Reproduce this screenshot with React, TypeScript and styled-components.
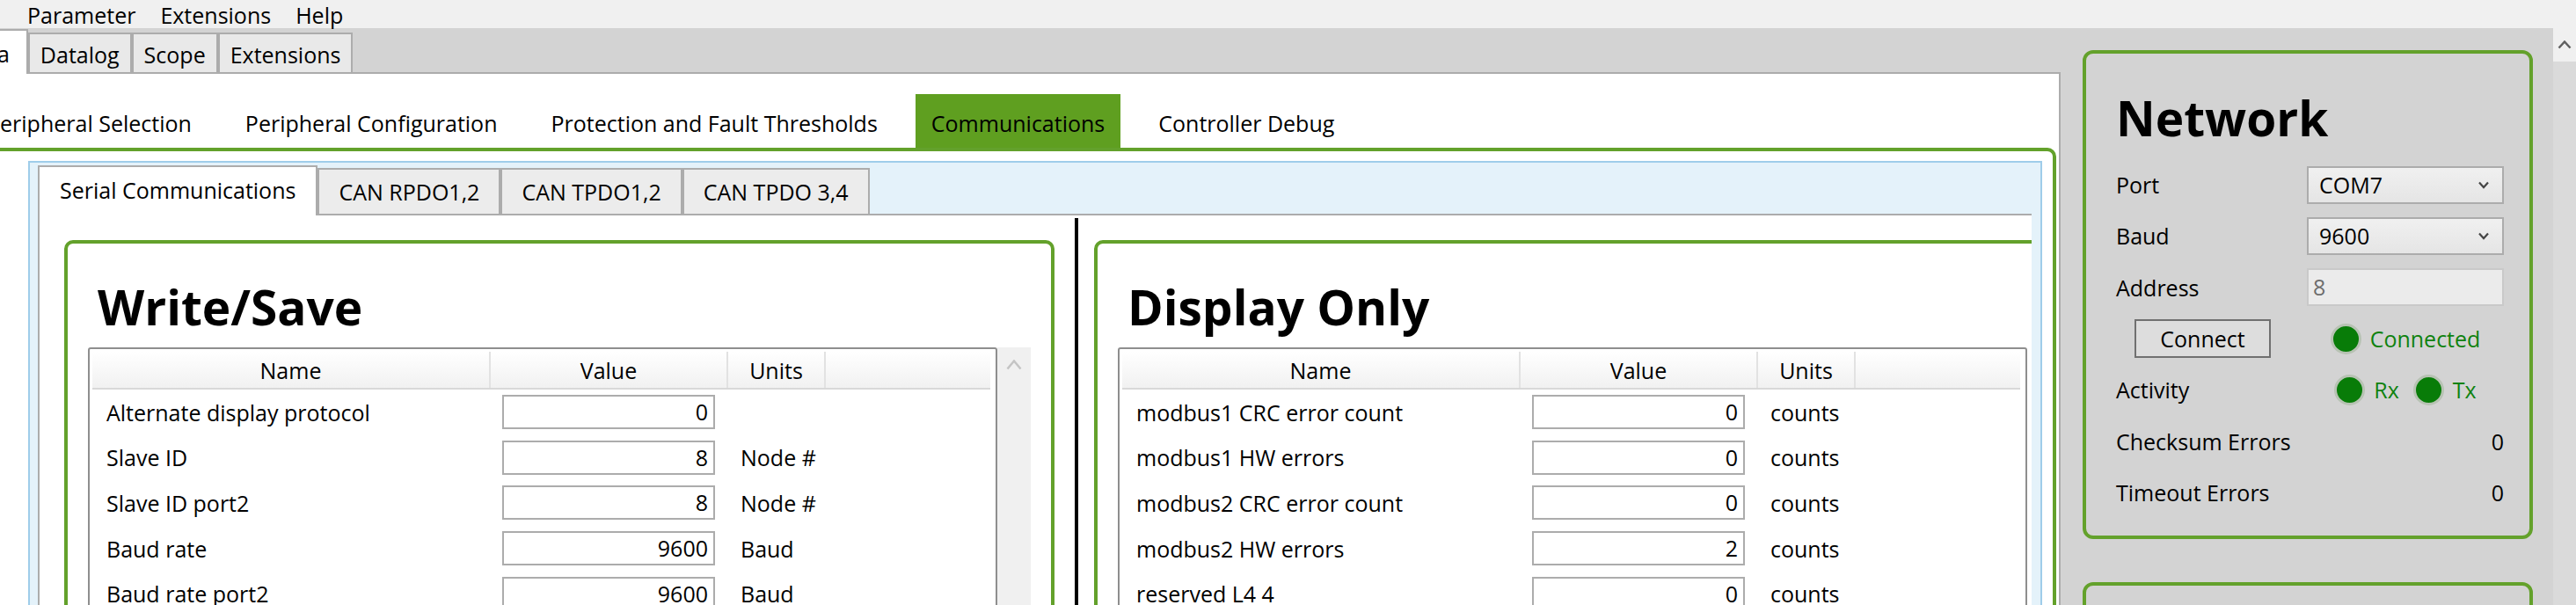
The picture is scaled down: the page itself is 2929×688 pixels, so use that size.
import React from "react";
import styled, { createGlobalStyle } from "styled-components";

const GREEN = "#63a12b";
const TAB_GREEN = "#5f9f20";
const TAB_BORDER = "#acacac";

const GlobalStyle = createGlobalStyle`
  html, body {
    margin: 0;
    padding: 0;
  }
  body {
    width: 2929px;
    height: 688px;
    overflow: hidden;
    background: #d3d3d3;
    color: #000;
    font-family: "Open Sans", "Noto Sans", sans-serif;
    font-size: 25px;
  }
`;

const Window = styled.div`
  display: flex;
  flex-direction: column;
  width: 2929px;
  height: 688px;
  overflow: hidden;
  background: #d3d3d3;
`;

const MenuBar = styled.div`
  display: flex;
  align-items: flex-start;
  flex-shrink: 0;
  height: 32px;
  padding-left: 17px;
  background: #f0f0f0;
`;

const MenuItem = styled.span`
  padding: 0 14px;
  line-height: 34px;
`;

const Body = styled.div`
  display: flex;
  flex: 1;
  min-height: 0;
`;

const MainColumn = styled.div`
  display: flex;
  flex-direction: column;
  flex-shrink: 0;
  width: 2343px;
`;

/* the window is scrolled a little to the right, so the first tabs are cut */
const OuterTabStrip = styled.div`
  display: flex;
  align-items: flex-end;
  flex-shrink: 0;
  height: 50px;
  margin-left: -59px;
`;

const OuterTab = styled.div<{ $active?: boolean }>`
  position: relative;
  z-index: ${(p) => (p.$active ? 1 : 0)};
  display: flex;
  align-items: center;
  box-sizing: border-box;
  height: ${(p) => (p.$active ? 51 : 45)}px;
  margin-bottom: ${(p) => (p.$active ? -2 : 0)}px;
  padding: ${(p) => (p.$active ? "2px 19px 0 13px" : "2px 12px 0")};
  border: 2px solid ${TAB_BORDER};
  border-bottom: none;
  background: ${(p) => (p.$active ? "#fff" : "#e9e9e9")};
  line-height: 34px;
  white-space: nowrap;
`;

const MainPanel = styled.div`
  display: flex;
  flex-direction: column;
  flex: 1;
  min-height: 0;
  padding-top: 23px;
  overflow: hidden;
  background: #fff;
  border-top: 2px solid ${TAB_BORDER};
  border-right: 2px solid ${TAB_BORDER};
`;

const SubTabStrip = styled.div`
  display: flex;
  flex-shrink: 0;
  gap: 25px;
  margin-left: -33px;
`;

const SubTab = styled.div<{ $active?: boolean }>`
  display: flex;
  align-items: center;
  box-sizing: border-box;
  height: 61px;
  padding: 4px 18px 0;
  background: ${(p) => (p.$active ? TAB_GREEN : "transparent")};
  white-space: nowrap;
`;

const GreenFrame = styled.div`
  display: flex;
  flex-direction: column;
  flex: 1;
  min-height: 0;
  margin: 0 3px 0 -16px;
  padding: 11px 12px 0 44px;
  border: 4px solid ${GREEN};
  border-bottom: none;
  border-radius: 10px 10px 0 0;
`;

const BluePanel = styled.div`
  display: flex;
  flex-direction: column;
  flex: 1;
  min-height: 0;
  padding: 3px 10px 0 9px;
  background: #e4f2fa;
  border: 2px solid #9fcdea;
  border-bottom: none;
`;

const PageTabStrip = styled.div`
  display: flex;
  align-items: flex-end;
  flex-shrink: 0;
  height: 55px;
`;

const PageTab = styled.div<{ $active?: boolean }>`
  position: relative;
  z-index: ${(p) => (p.$active ? 1 : 0)};
  display: flex;
  align-items: center;
  box-sizing: border-box;
  height: ${(p) => (p.$active ? 57 : 52)}px;
  margin-bottom: ${(p) => (p.$active ? -2 : 0)}px;
  padding: 0 ${(p) => (p.$active ? 23 : 22)}px ${(p) => (p.$active ? 3 : 0)}px;
  border: 2px solid ${TAB_BORDER};
  border-bottom: none;
  background: ${(p) => (p.$active ? "#fff" : "#ececec")};
  white-space: nowrap;
`;

const TabContent = styled.div`
  display: flex;
  align-items: flex-start;
  flex: 1;
  min-height: 0;
  padding: 3px 0 0 28px;
  overflow: hidden;
  background: #fff;
  border: 2px solid ${TAB_BORDER};
  border-bottom: none;
  border-right: none;
`;

const Column = styled.div`
  flex-shrink: 0;
  width: 1126px;
  padding-top: 25px;
`;

const Splitter = styled.div`
  flex-shrink: 0;
  align-self: stretch;
  width: 4px;
  margin: 0 18px 0 23px;
  background: #000;
`;

const GroupBox = styled.div`
  box-sizing: border-box;
  height: 480px;
  padding: 0 23px;
  border: 4px solid ${GREEN};
  border-radius: 10px;
`;

const GroupTitle = styled.h2`
  margin: 34px 0 9px 11px;
  font-size: 55px;
  font-weight: 700;
  line-height: 75px;
`;

const GridWrap = styled.div`
  display: flex;
`;

const Grid = styled.div`
  flex: 1;
  height: 400px;
  padding: 3px 6px 0 3px;
  border: 2px solid #8e8e8e;
  border-radius: 3px;
`;

const HeaderRow = styled.div`
  display: flex;
  box-sizing: border-box;
  height: 43px;
  background: linear-gradient(#ffffff, #f1f1f1);
  border-bottom: 2px solid #d8d8d8;
`;

const HeaderCell = styled.div<{ $w?: number }>`
  box-sizing: border-box;
  flex: ${(p) => (p.$w ? `0 0 ${p.$w}px` : "1")};
  padding-top: 1px;
  border-right: ${(p) => (p.$w ? "2px solid #e2e2e2" : "none")};
  text-align: center;
  line-height: 40px;
`;

const Row = styled.div`
  display: flex;
  align-items: center;
  height: 51.6px;
`;

const NameCell = styled.div`
  flex: 0 0 453px;
  box-sizing: border-box;
  padding-left: 16px;
  white-space: nowrap;
`;

const ValueCell = styled.div`
  flex: 0 0 270px;
  box-sizing: border-box;
  padding-left: 13px;
`;

const ValueBox = styled.div`
  box-sizing: border-box;
  width: 242px;
  height: 39px;
  padding-right: 6px;
  border: 2px solid ${TAB_BORDER};
  text-align: right;
  line-height: 35px;
`;

const UnitCell = styled.div`
  padding-left: 14px;
  white-space: nowrap;
`;

const GridScroll = styled.div<{ $hidden?: boolean }>`
  display: flex;
  justify-content: center;
  flex: 0 0 38px;
  padding-top: 14px;
  box-sizing: border-box;
  background: ${(p) => (p.$hidden ? "transparent" : "#f0f0f0")};
`;

const SideArea = styled.div`
  display: flex;
  flex: 1;
  min-width: 0;
`;

const SideContent = styled.div`
  display: flex;
  flex-direction: column;
  flex: 1;
  gap: 49px;
  padding: 25px 23px 0 25px;
  overflow: hidden;
`;

const Panel = styled.div<{ $h?: number }>`
  flex-shrink: 0;
  box-sizing: border-box;
  height: ${(p) => (p.$h ? `${p.$h}px` : "auto")};
  padding: 0 29px 20px 34px;
  border: 4px solid ${GREEN};
  border-radius: 12px;
`;

const PanelTitle = styled.h2`
  margin: 35px 0 10px;
  font-size: 55px;
  font-weight: 700;
  line-height: 75px;
`;

const NetGrid = styled.div`
  display: grid;
  grid-template-columns: 217px 1fr;
  grid-auto-rows: 58.3px;
  align-items: center;
`;

const Combo = styled.div`
  display: flex;
  align-items: center;
  justify-content: space-between;
  box-sizing: border-box;
  height: 43px;
  padding: 0 15px 0 12px;
  background: linear-gradient(#f0f0f0, #e5e5e5);
  border: 2px solid ${TAB_BORDER};
`;

const AddressBox = styled.div`
  box-sizing: border-box;
  height: 43px;
  padding-left: 5px;
  background: #ebebeb;
  border: 2px solid #c9c9c9;
  color: #6d6d6d;
  line-height: 39px;
`;

const Button = styled.div`
  box-sizing: border-box;
  width: 155px;
  height: 44px;
  margin-left: 21px;
  background: #dddddd;
  border: 2px solid #707070;
  text-align: center;
  line-height: 40px;
`;

const LedGroup = styled.div`
  display: flex;
  align-items: center;
  justify-self: center;
  gap: 16px;
`;

const Led = styled.div`
  display: flex;
  align-items: center;
  gap: 10px;
  color: #0f820f;
`;

const Dot = styled.span`
  box-sizing: border-box;
  width: 35px;
  height: 35px;
  background: #087c08;
  border: 3px solid #b7c2b3;
  border-radius: 50%;
`;

const Count = styled.div`
  justify-self: end;
`;

const PageScroll = styled.div`
  display: flex;
  flex-direction: column;
  flex-shrink: 0;
  width: 26px;
  background: #dadada;
`;

const ScrollButton = styled.div`
  display: flex;
  align-items: center;
  justify-content: center;
  height: 38px;
  background: #f0f0f0;
`;

const ChevronUp = ({ color, w, h }: { color: string; w: number; h: number }) => (
  <svg width={w} height={h} viewBox={`0 0 ${w} ${h}`}>
    <polyline
      points={`1.5,${h - 1.5} ${w / 2},1.5 ${w - 1.5},${h - 1.5}`}
      fill="none"
      stroke={color}
      strokeWidth="2.5"
    />
  </svg>
);

const ChevronDown = () => (
  <svg width="12" height="9" viewBox="0 0 12 9">
    <polyline points="1,1.5 6,7 11,1.5" fill="none" stroke="#454545" strokeWidth="2.2" />
  </svg>
);

interface IRow {
  name: string;
  value: string;
  units: string;
}

const writeRows: IRow[] = [
  { name: "Alternate display protocol", value: "0", units: "" },
  { name: "Slave ID", value: "8", units: "Node #" },
  { name: "Slave ID port2", value: "8", units: "Node #" },
  { name: "Baud rate", value: "9600", units: "Baud" },
  { name: "Baud rate port2", value: "9600", units: "Baud" },
];

const displayRows: IRow[] = [
  { name: "modbus1 CRC error count", value: "0", units: "counts" },
  { name: "modbus1 HW errors", value: "0", units: "counts" },
  { name: "modbus2 CRC error count", value: "0", units: "counts" },
  { name: "modbus2 HW errors", value: "2", units: "counts" },
  { name: "reserved L4 4", value: "0", units: "counts" },
];

const ParamGroup = ({ title, rows, scroll }: { title: string; rows: IRow[]; scroll?: boolean }) => (
  <GroupBox>
    <GroupTitle>{title}</GroupTitle>
    <GridWrap>
      <Grid>
        <HeaderRow>
          <HeaderCell $w={453}>Name</HeaderCell>
          <HeaderCell $w={270}>Value</HeaderCell>
          <HeaderCell $w={111}>Units</HeaderCell>
          <HeaderCell />
        </HeaderRow>
        {rows.map((r) => (
          <Row key={r.name}>
            <NameCell>{r.name}</NameCell>
            <ValueCell>
              <ValueBox>{r.value}</ValueBox>
            </ValueCell>
            <UnitCell>{r.units}</UnitCell>
          </Row>
        ))}
      </Grid>
      <GridScroll $hidden={!scroll}>
        {scroll && <ChevronUp color="#c4c4c4" w={18} h={12} />}
      </GridScroll>
    </GridWrap>
  </GroupBox>
);

const App = () => {
  return (
    <Window>
      <GlobalStyle />
      <MenuBar>
        <MenuItem>Parameter</MenuItem>
        <MenuItem>Extensions</MenuItem>
        <MenuItem>Help</MenuItem>
      </MenuBar>
      <Body>
        <MainColumn>
          <OuterTabStrip>
            <OuterTab $active>Data</OuterTab>
            <OuterTab>Datalog</OuterTab>
            <OuterTab>Scope</OuterTab>
            <OuterTab>Extensions</OuterTab>
          </OuterTabStrip>
          <MainPanel>
            <SubTabStrip>
              <SubTab>Peripheral Selection</SubTab>
              <SubTab>Peripheral Configuration</SubTab>
              <SubTab>Protection and Fault Thresholds</SubTab>
              <SubTab $active>Communications</SubTab>
              <SubTab>Controller Debug</SubTab>
            </SubTabStrip>
            <GreenFrame>
              <BluePanel>
                <PageTabStrip>
                  <PageTab $active>Serial Communications</PageTab>
                  <PageTab>CAN RPDO1,2</PageTab>
                  <PageTab>CAN TPDO1,2</PageTab>
                  <PageTab>CAN TPDO 3,4</PageTab>
                </PageTabStrip>
                <TabContent>
                  <Column>
                    <ParamGroup title="Write/Save" rows={writeRows} scroll />
                  </Column>
                  <Splitter />
                  <Column>
                    <ParamGroup title="Display Only" rows={displayRows} />
                  </Column>
                </TabContent>
              </BluePanel>
            </GreenFrame>
          </MainPanel>
        </MainColumn>
        <SideArea>
          <SideContent>
            <Panel>
              <PanelTitle>Network</PanelTitle>
              <NetGrid>
                <span>Port</span>
                <Combo>
                  COM7
                  <ChevronDown />
                </Combo>
                <span>Baud</span>
                <Combo>
                  9600
                  <ChevronDown />
                </Combo>
                <span>Address</span>
                <AddressBox>8</AddressBox>
                <Button>Connect</Button>
                <LedGroup>
                  <Led>
                    <Dot />
                    Connected
                  </Led>
                </LedGroup>
                <span>Activity</span>
                <LedGroup>
                  <Led>
                    <Dot />
                    Rx
                  </Led>
                  <Led>
                    <Dot />
                    Tx
                  </Led>
                </LedGroup>
                <span>Checksum Errors</span>
                <Count>0</Count>
                <span>Timeout Errors</span>
                <Count>0</Count>
              </NetGrid>
            </Panel>
            <Panel $h={220} />
          </SideContent>
          <PageScroll>
            <ScrollButton>
              <ChevronUp color="#606060" w={16} h={10} />
            </ScrollButton>
          </PageScroll>
        </SideArea>
      </Body>
    </Window>
  );
};

export default App;
